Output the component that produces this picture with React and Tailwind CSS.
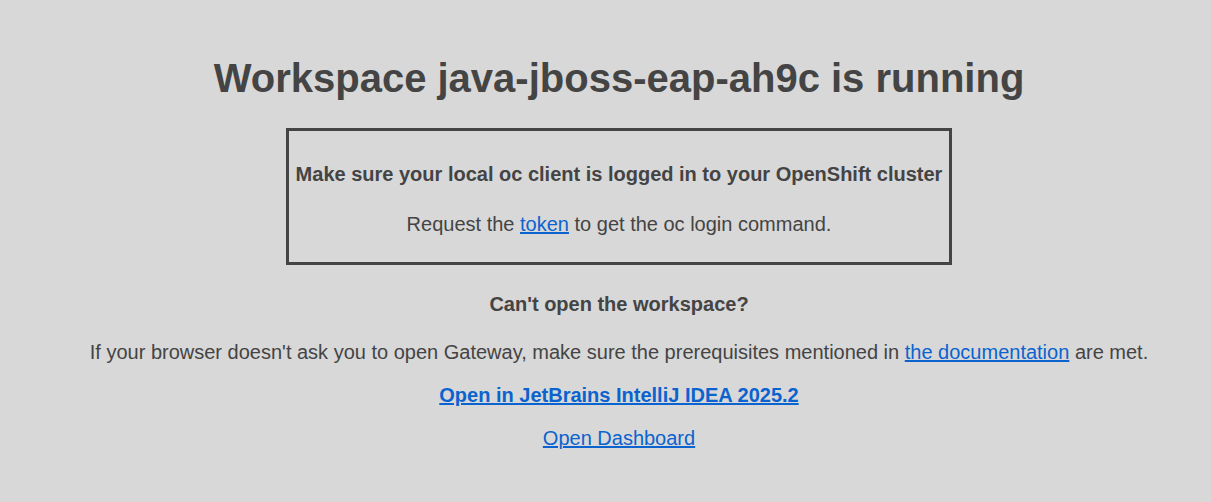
export default function App() {
  return (
    <div className="min-h-[502px] bg-[#d8d8d8] text-[#444444] font-['Liberation_Sans',Arial,sans-serif] pl-[27px] flex flex-col items-center text-center">
      <h1 className="mt-[55px] text-[40px] leading-[46px] font-bold">
        Workspace java-jboss-eap-ah9c is running
      </h1>

      <div className="mt-[27px] border-[3px] border-[#444444] px-[7px] pt-[32px] pb-[26px]">
        <p className="text-[20px] leading-[23px] font-bold">
          Make sure your local oc client is logged in to your OpenShift cluster
        </p>
        <p className="mt-[27px] text-[20px] leading-[23px]">
          Request the{" "}
          <a href="#" className="text-[#0b63cf] underline">
            token
          </a>{" "}
          to get the oc login command.
        </p>
      </div>

      <p className="mt-[28px] text-[20px] leading-[23px] font-bold">
        Can't open the workspace?
      </p>
      <p className="mt-[25px] text-[20px] leading-[23px]">
        If your browser doesn't ask you to open Gateway, make sure the prerequisites mentioned in{" "}
        <a href="#" className="text-[#0b63cf] underline">
          the documentation
        </a>{" "}
        are met.
      </p>
      <a href="#" className="mt-[20px] text-[20px] leading-[23px] font-bold text-[#0b63cf] underline">
        Open in JetBrains IntelliJ IDEA 2025.2
      </a>
      <a href="#" className="mt-[20px] text-[20px] leading-[23px] text-[#0b63cf] underline">
        Open Dashboard
      </a>
    </div>
  );
}
